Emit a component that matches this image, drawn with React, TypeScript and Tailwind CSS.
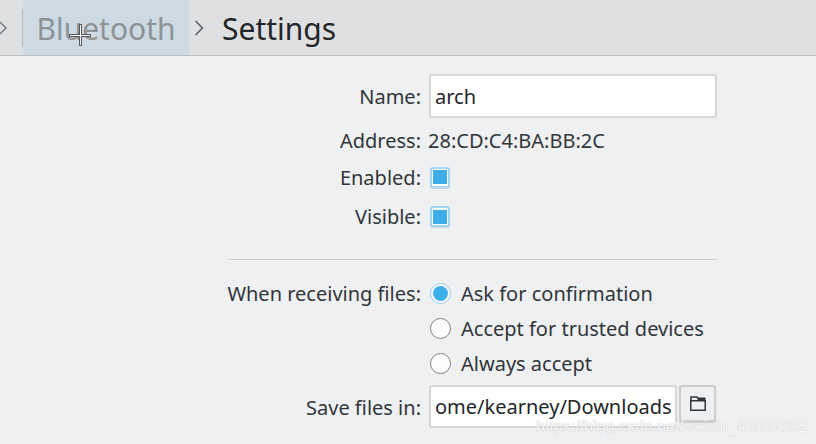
function Row({ label, className, children }: { label: string; className: string; children: React.ReactNode }) {
  return (
    <div className={`flex items-center ${className}`}>
      <span className="w-[193px] shrink-0 text-right">{label}</span>
      <div className="ml-[8px] flex min-w-0 flex-1 items-center">{children}</div>
    </div>
  );
}

function Checkbox() {
  return (
    <span className="ml-[1px] -mt-[1px] flex h-[21px] w-[20px] items-center justify-center rounded-[3px] border-2 border-[#a5d6f2] bg-[#fcfcfc] shadow-[0_1px_1px_rgba(0,0,0,0.15)]">
      <span className="h-[14px] w-[14px] bg-[#3daee9]" />
    </span>
  );
}

function Radio({ checked, label }: { checked?: boolean; label: string }) {
  return (
    <div className="flex h-[35px] items-center">
      <span
        className={`ml-[1px] flex h-[21px] w-[21px] items-center justify-center rounded-full border bg-[#fcfcfc] ${
          checked ? "border-[#93cef0]" : "border-[#7f8285]"
        }`}
      >
        {checked && <span className="h-[15px] w-[15px] rounded-full bg-[#3daee9]" />}
      </span>
      <span className="ml-[10px]">{label}</span>
    </div>
  );
}

export default function App() {
  return (
    <div className="relative h-[444px] w-[816px] overflow-hidden bg-[#eff0f1] font-['Noto_Sans',sans-serif] text-[20px] text-[#31363b]">
      {/* Breadcrumb */}
      <header className="flex h-[56px] items-center border-b border-[#bcbebf] bg-[#dfe0e1]">
        <svg width="8" height="14" viewBox="0 0 8 14" fill="none" stroke="#75797c" strokeWidth="1.4" className="-ml-[1px]">
          <path d="M1 1l6 6-6 6" />
        </svg>
        <div className="ml-[15px] h-[38px] w-px bg-[#b8babb]" />
        <div className="flex h-[55px] w-[166px] items-center justify-center rounded-[4px] bg-[#cddae3] pt-[2px] text-[30px] text-[#8d9396]">
          Bluetooth
        </div>
        <svg width="10" height="16" viewBox="0 0 10 16" fill="none" stroke="#5b5f62" strokeWidth="1.5" className="ml-[5px]">
          <path d="M1.5 1l7 7-7 7" />
        </svg>
        <span className="ml-[18px] pt-[2px] text-[30px] text-[#232629]">Settings</span>
      </header>

      {/* Form */}
      <div className="ml-[228px] w-[489px] pt-[18px]">
        <Row label="Name:" className="h-[44px] pt-[2px]">
          <div className="-mt-[2px] flex h-[44px] w-[288px] items-center rounded-[3px] border-2 border-[#d5d6d7] bg-white pl-[4px] pt-[2px] text-[#232629]">
            arch
          </div>
        </Row>
        <Row label="Address:" className="mt-[5px] h-[35px]">
          <span className="-ml-[1px]">28:CD:C4:BA:BB:2C</span>
        </Row>
        <Row label="Enabled:" className="h-[39px]">
          <Checkbox />
        </Row>
        <Row label="Visible:" className="h-[40px]">
          <Checkbox />
        </Row>
        <div className="mt-[22px] h-px bg-[#cfd0d1]" />
        <div className="mt-[16px] flex">
          <span className="flex h-[35px] w-[193px] shrink-0 items-center justify-end whitespace-nowrap">When receiving files:</span>
          <div className="ml-[8px] flex flex-col">
            <Radio checked label="Ask for confirmation" />
            <Radio label="Accept for trusted devices" />
            <Radio label="Always accept" />
          </div>
        </div>
        <div className="mt-[4px] flex h-[43px] items-center">
          <span className="w-[193px] shrink-0 pt-[3px] text-right">Save files in:</span>
          <div className="ml-[8px] flex h-[43px] w-[248px] items-center overflow-hidden rounded-[3px] border-2 border-[#d5d6d7] bg-white pl-[4px] text-[#232629]">
            <span className="whitespace-nowrap">ome/kearney/Downloads</span>
          </div>
          <div className="ml-[2px] flex h-[37px] w-[37px] items-center justify-center self-start rounded-[3px] border-2 border-[#cdcecf] bg-[#eff0f1] shadow-[0_1px_1px_rgba(0,0,0,0.15)]">
            <svg width="16" height="15" viewBox="0 0 16 15" fill="none" stroke="#31363b" strokeWidth="1.5">
              <path d="M1 4V1h6l2 3" />
              <path d="M.75 4.75h14.5v9.5H.75z" />
              <path d="M7 1.5h8.5v3H9z" fill="#31363b" stroke="none" />
            </svg>
          </div>
        </div>
      </div>

      {/* Mouse cursor */}
      <svg width="22" height="22" viewBox="0 0 22 22" className="absolute left-[69px] top-[24px]" shapeRendering="crispEdges">
        <path d="M11.5 0v22M0 11.5h22" stroke="#55595c" strokeWidth="3" />
        <path d="M11.5 1v20M1 11.5h20" stroke="#ffffff" strokeWidth="1" />
      </svg>

      {/* Watermark */}
      <span className="absolute left-[536px] top-[415px] whitespace-nowrap font-['Liberation_Sans',sans-serif] text-[16px] text-[#f6f6f6] [text-shadow:0_0_1px_#b9babb]">
        https://blog.csdn.net/weixin_43031092
      </span>
    </div>
  );
}
